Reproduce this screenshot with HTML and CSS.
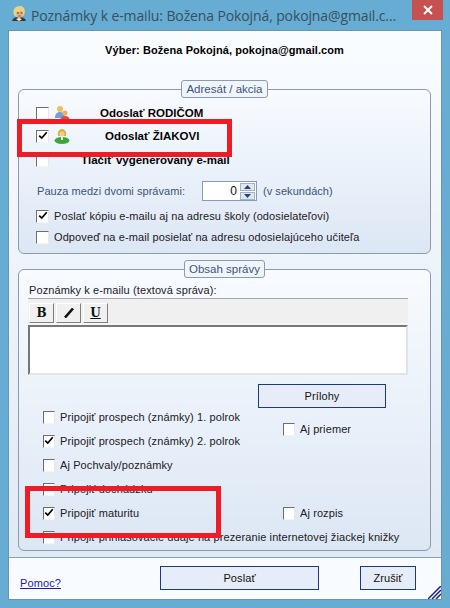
FILE: index.html
```html
<!DOCTYPE html>
<html lang="sk">
<head>
<meta charset="utf-8">
<title>Poznámky k e-mailu</title>
<link rel="stylesheet" href="styles.css">
</head>
<body>
<div class="window">
  <header class="titlebar">
    <svg class="title-icon" viewBox="0 0 16 16" width="16" height="16">
      <path d="M1 15c1-3 3-4 7-4s6 1 7 4z" fill="#3c3a34"/>
      <path d="M5 13l3-1 3 1-3 2z" fill="#f4f0e8"/>
      <path d="M3 9C1 4 4 0 9 0c4 0 6 4 4 9-2 3-8 3-10 0z" fill="#efd27e"/>
      <path d="M5 6c2 0 5-1 6-2l1 4c-1 3-2 4-4 4S5 10 5 6z" fill="#e4b48e"/>
      <path d="M6 7h2M9.500 7h2" stroke="#3b3b3b" stroke-width="1"/>
      <path d="M7 10h3" stroke="#a2524a" stroke-width="1"/>
    </svg>
    <span class="title-text">Poznámky k e-mailu: Božena Pokojná, pokojna@gmail.c...</span>
    <div class="close">
      <svg viewBox="0 0 10 10" width="10" height="10"><path d="M1 1l8 8M9 1l-8 8" stroke="#fff" stroke-width="2"/></svg>
    </div>
  </header>
  <div class="client">
    <main class="panel">
      <h1 class="selection">Výber: Božena Pokojná, pokojna@gmail.com</h1>

      <section class="group group-recipient">
        <div class="legend">Adresát / akcia</div>
        <div class="row row-first">
          <span class="check"></span>
          <svg class="row-icon" viewBox="0 0 16 16" width="16" height="16">
            <circle cx="6" cy="4" r="3" fill="#e9c15f"/>
            <path d="M1 13c0-4 2-6 5-6s5 2 5 6z" fill="#6f9fdc"/>
            <circle cx="11" cy="8" r="2.600" fill="#e8b060"/>
            <path d="M6 16c0-3 2-5 5-5s5 2 5 5z" fill="#d9503f"/>
          </svg>
          <strong class="send send-parents">Odoslať RODIČOM</strong>
        </div>
        <div class="row row-gap3">
          <span class="check is-checked"><svg viewBox="0 0 12 12" width="10" height="10"><path d="M1.500 5.500l3 3 6-7" fill="none" stroke="#000" stroke-width="2"/></svg></span>
          <svg class="row-icon" viewBox="0 0 16 16" width="16" height="16">
            <path d="M4 8c-1-5 2-7 4-7s5 2 4 7z" fill="#d8b040"/>
            <circle cx="8" cy="6" r="2.500" fill="#efd08a"/>
            <ellipse cx="8" cy="12.500" rx="7.500" ry="3.500" fill="#3fa63a"/>
            <path d="M7 9h2v3H7z" fill="#dff0d0"/>
          </svg>
          <strong class="send send-student">Odoslať ŽIAKOVI</strong>
        </div>
        <div class="row row-gap4">
          <span class="check"></span>
          <strong class="send send-print">Tlačiť vygenerovaný e-mail</strong>
        </div>
        <div class="row row-gap11 row-pause">
          <span class="muted pause-label">Pauza medzi dvomi správami:</span>
          <div class="spinner">
            <span class="spinner-value">0</span>
            <div class="spinner-buttons">
              <span class="spin"><svg viewBox="0 0 7 4" width="7" height="4"><path d="M3.500 0L7 4H0z" fill="#23456e"/></svg></span>
              <span class="spin"><svg viewBox="0 0 7 4" width="7" height="4"><path d="M0 0h7L3.500 4z" fill="#23456e"/></svg></span>
            </div>
          </div>
          <span class="muted seconds">(v sekundách)</span>
        </div>
        <div class="row row-gap5">
          <span class="check is-checked"><svg viewBox="0 0 12 12" width="10" height="10"><path d="M1.500 5.500l3 3 6-7" fill="none" stroke="#000" stroke-width="2"/></svg></span>
          <span class="label">Poslať kópiu e-mailu aj na adresu školy (odosielateľovi)</span>
        </div>
        <div class="row row-gap1">
          <span class="check"></span>
          <span class="label">Odpoveď na e-mail posielať na adresu odosielajúceho učiteľa</span>
        </div>
      </section>

      <section class="group group-content">
        <div class="legend">Obsah správy</div>
        <div class="editor">
          <div class="editor-label">Poznámky k e-mailu (textová správa):</div>
          <div class="toolbar">
            <span class="tool tool-b">B</span>
            <span class="tool"><svg viewBox="0 0 12 10" width="12" height="10"><path d="M2 9.500L10 .5" stroke="#111" stroke-width="2.600"/></svg></span>
            <span class="tool tool-u">U</span>
          </div>
          <div class="textarea"></div>
        </div>
        <div class="attach-row"><button class="btn btn-attach">Prílohy</button></div>
        <div class="options">
          <div class="opt opt-left"><span class="check"></span><span class="label">Pripojiť prospech (známky) 1. polrok</span></div>
          <div class="opt opt-average"><span class="check"></span><span class="label">Aj priemer</span></div>
          <div class="opt opt-left"><span class="check is-checked"><svg viewBox="0 0 12 12" width="10" height="10"><path d="M1.500 5.500l3 3 6-7" fill="none" stroke="#000" stroke-width="2"/></svg></span><span class="label">Pripojiť prospech (známky) 2. polrok</span></div>
          <div class="opt opt-left"><span class="check"></span><span class="label">Aj Pochvaly/poznámky</span></div>
          <div class="opt opt-left"><span class="check"></span><span class="label">Pripojiť dochádzku</span></div>
          <div class="opt opt-left"><span class="check is-checked"><svg viewBox="0 0 12 12" width="10" height="10"><path d="M1.500 5.500l3 3 6-7" fill="none" stroke="#000" stroke-width="2"/></svg></span><span class="label">Pripojiť maturitu</span></div>
          <div class="opt opt-schedule"><span class="check"></span><span class="label">Aj rozpis</span></div>
          <div class="opt opt-wide"><span class="check"></span><span class="label">Pripojiť prihlasovacie údaje na prezeranie internetovej žiackej knižky</span></div>
        </div>
      </section>
    </main>
    <footer class="footer">
      <a class="help" href="#">Pomoc?</a>
      <button class="btn btn-send">Poslať</button>
      <button class="btn btn-cancel">Zrušiť</button>
      <svg class="grip" viewBox="0 0 13 13" width="13" height="13"><path d="M0 13L13 0M4 13L13 4M8 13l5-5" stroke="#1b1ba8" stroke-width="1.500"/></svg>
    </footer>
  </div>
  <div class="mark mark-student"></div>
  <div class="mark mark-maturita"></div>
</div>
</body>
</html>
```
FILE: styles.css
```css
* { box-sizing: border-box; }
html, body { margin: 0; height: 100%; background: #67acd2; }
body { overflow: hidden; font: 11px/13px "Liberation Sans", Arial, sans-serif; color: #111; }

.window { position: relative; width: 450px; height: 608px; padding: 0 8px; }

.titlebar { height: 30px; display: flex; align-items: flex-start; }
.title-icon { margin: 6px 0 0 3px; flex: none; }
.title-text { flex: 1; min-width: 0; margin: 6px 0 0 4px; font: 14px/20px "Open Sans", sans-serif; letter-spacing: -0.12px; color: #37505f; white-space: nowrap; }
.close { width: 31px; height: 20px; background: #c75050; display: flex; align-items: center; justify-content: center; margin-right: -1px; flex: none; }

.client { width: 434px; height: 570px; border: 1px solid #6f93a9; display: flex; flex-direction: column; background: #f8fbff; }

.panel { height: 527px; padding: 0 10px 0 9px; background: linear-gradient(#f9fcff, #dfe9f5); border-bottom: 1px solid #8ba0b4; }
.selection { margin: 0; height: 40px; padding-top: 13px; font-size: 11px; line-height: 13px; font-weight: 700; letter-spacing: 0.08px; text-align: center; color: #000; }

.group { display: flex; flex-direction: column; border: 1px solid #8d9bac; border-radius: 6px; background: linear-gradient(#f8fbff, #dce7f4); }
.group-recipient { height: 165px; margin-top: 18px; }
.group-content { height: 282px; margin-top: 15px; }
.legend { align-self: center; height: 18px; margin-top: -10px; padding: 0 4px; border: 1px solid #8d9bac; border-radius: 3px; background: #f0f5fc; color: #3c5578; font-size: 11.500px; line-height: 16px; white-space: nowrap; }

.row { display: flex; align-items: center; height: 20px; padding-left: 17px; white-space: nowrap; }
.row-first { margin-top: 5px; }
.row-gap1 { margin-top: 1px; }
.row-gap3 { margin-top: 3px; }
.row-gap4 { margin-top: 4px; }
.row-gap5 { margin-top: 5px; }
.row-gap11 { margin-top: 11px; }

.check { flex: none; display: flex; align-items: center; justify-content: center; width: 13px; height: 13px; background: #fff; border: 1px solid; border-color: #6e6e6e #e8e8e8 #f4f4f4 #6e6e6e; }
.row-icon { flex: none; margin-left: 5px; }
.label { margin-left: 5px; font-size: 11px; letter-spacing: 0.1px; color: #1c2024; white-space: nowrap; }
.muted { color: #3c5578; font-size: 11px; letter-spacing: 0.05px; }

.send { font-size: 11.500px; color: #050505; }
.send-parents { margin-left: 30px; }
.send-student { margin-left: 35px; }
.send-print { margin-left: 32px; }

.pause-label { margin-left: 1px; width: 165px; }
.spinner { flex: none; display: flex; align-items: center; justify-content: flex-end; width: 55px; height: 20px; background: #fff; border: 1px solid #8a9bb0; padding-right: 1px; }
.spinner-value { font-size: 12px; color: #111; margin-right: 3px; }
.spinner-buttons { display: flex; flex-direction: column; gap: 1px; }
.spin { display: flex; align-items: center; justify-content: center; width: 15px; height: 8px; background: #dfe7f3; border: 1px solid #a4b2c4; }
.seconds { margin-left: 6px; }

.editor { padding: 5px 22px 0 9px; }
.editor-label { font-size: 11px; letter-spacing: 0.1px; line-height: 14px; margin-left: 1px; color: #1c2024; }
.toolbar { display: flex; gap: 2px; height: 25px; padding: 4px 0 0 1px; margin-top: 1px; background: #f0f0f0; border-top: 1px solid #a8a8a8; }
.tool { display: flex; align-items: center; justify-content: center; width: 25px; height: 20px; background: #f0f0f0; border: 1px solid; border-color: #fff #808080 #808080 #fff; font: 700 12px "DejaVu Serif", serif; color: #111; }
.tool-u { text-decoration: underline; }
.textarea { height: 50px; margin-top: 2px; background: #fff; border: 2px solid; border-color: #777 #e4e4e4 #e4e4e4 #777; }

.attach-row { display: flex; padding-left: 239px; margin-top: 9px; }
.btn { font: 11px "Liberation Sans", Arial, sans-serif; letter-spacing: 0.1px; color: #111; background: #e6edf9; border: 1px solid #173a8c; border-radius: 0; padding: 0; }
.btn-attach { width: 128px; height: 24px; }

.options { display: grid; grid-template-columns: 240px 1fr; grid-auto-rows: 24px; margin-top: -3px; padding-left: 24px; }
.opt { display: flex; align-items: center; white-space: nowrap; grid-column: 1; }
.opt-average { grid-column: 2; grid-row: 1 / span 2; }
.opt-schedule { grid-column: 2; grid-row: 5; }
.opt-wide { grid-column: 1 / span 2; }
.opt .check { width: 12px; height: 13px; }

.footer { flex: 1; display: flex; align-items: flex-start; position: relative; padding: 8px 0 0 11px; background: #f8fbff; }
.help { width: 140px; margin-top: 11px; color: #1b1ba8; font-size: 11px; letter-spacing: 0.1px; text-decoration: underline; }
.btn-send { width: 159px; height: 24px; }
.btn-cancel { width: 56px; height: 24px; margin-left: 41px; }
.grip { position: absolute; right: 0; bottom: 0; }

.mark { position: absolute; border: 5px solid #ee1c25; pointer-events: none; }
.mark-student { left: 17px; top: 119px; width: 215px; height: 38px; }
.mark-maturita { left: 25px; top: 486px; width: 196px; height: 52px; }
```
